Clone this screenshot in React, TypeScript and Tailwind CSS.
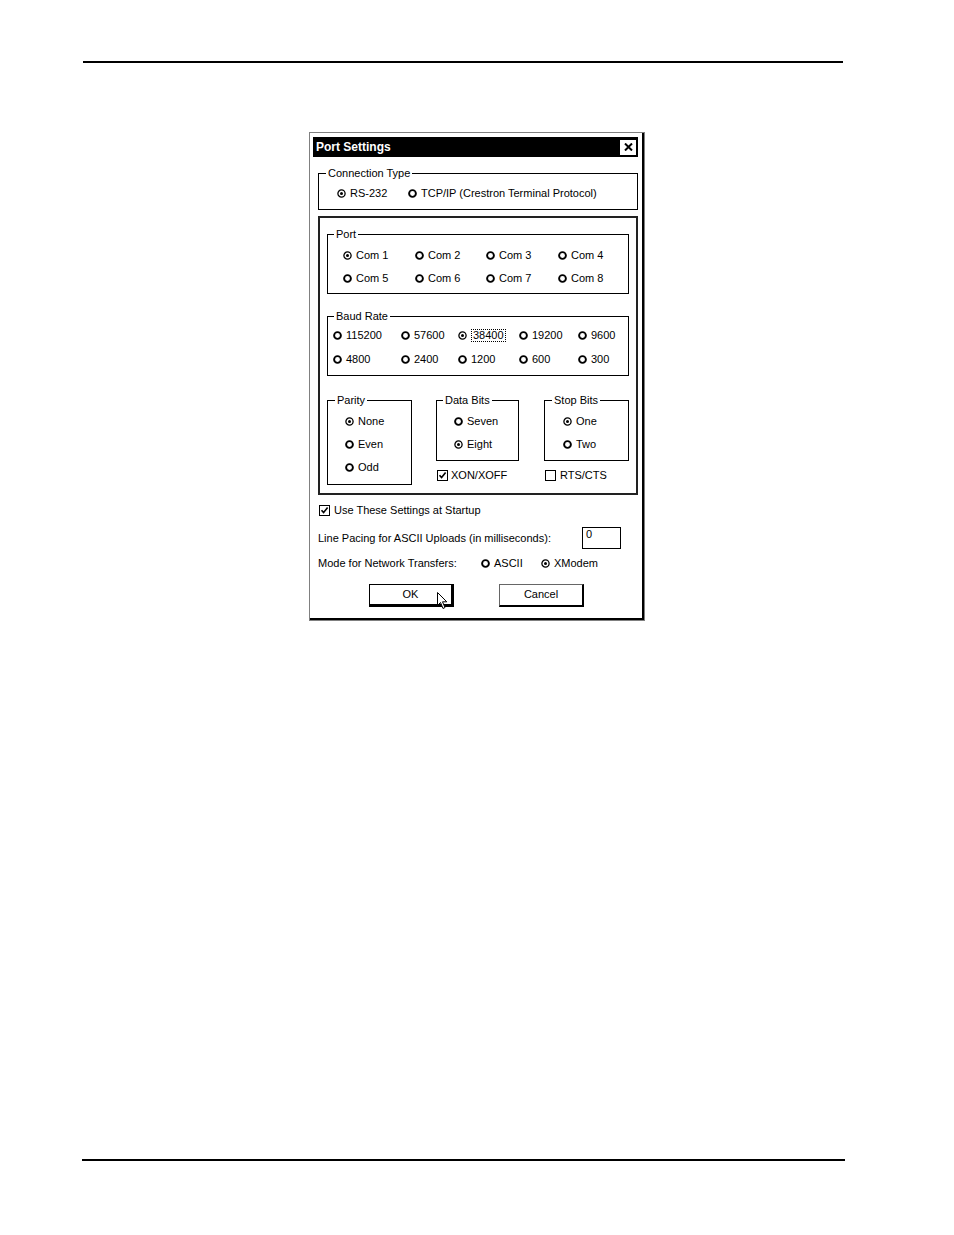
import type { ReactNode } from "react";

function Radio({ checked = false }: { checked?: boolean }) {
  return (
    <svg width="9" height="9" viewBox="0 0 9 9" className="shrink-0">
      {checked ? (
        <>
          <circle cx="4.5" cy="4.5" r="3.6" fill="white" stroke="black" strokeWidth="1.3" />
          <circle cx="4.5" cy="4.5" r="1.5" fill="black" />
        </>
      ) : (
        <circle cx="4.5" cy="4.5" r="3.4" fill="white" stroke="black" strokeWidth="1.9" />
      )}
    </svg>
  );
}

function Check({ checked = false }: { checked?: boolean }) {
  return (
    <span className="flex h-[11px] w-[11px] shrink-0 items-center justify-center border border-black bg-white">
      {checked && (
        <svg width="9" height="9" viewBox="0 0 9 9">
          <path d="M1.5 4.2 L3.6 6.6 L7.6 1.6" fill="none" stroke="black" strokeWidth="1.6" />
        </svg>
      )}
    </span>
  );
}

function Option({ label, checked, focus }: { label: string; checked?: boolean; focus?: boolean }) {
  return (
    <div className="flex h-[13px] items-center gap-[4px] leading-[13px]">
      <Radio checked={checked} />
      <span className={focus ? "border border-dotted border-black px-[1px] leading-[11px]" : ""}>{label}</span>
    </div>
  );
}

function GroupBox({
  title,
  labelLeft,
  className,
  children,
}: {
  title: string;
  labelLeft: string;
  className: string;
  children: ReactNode;
}) {
  return (
    <div className={`relative border border-black ${className}`}>
      <span className={`absolute -top-[7px] ${labelLeft} bg-white px-[2px] leading-[13px]`}>{title}</span>
      {children}
    </div>
  );
}

const PORTS = ["Com 1", "Com 2", "Com 3", "Com 4", "Com 5", "Com 6", "Com 7", "Com 8"];
const BAUDS = ["115200", "57600", "38400", "19200", "9600", "4800", "2400", "1200", "600", "300"];

export default function App() {
  return (
    <div className="relative h-[1235px] w-[954px] overflow-hidden bg-white font-['Liberation_Sans',Arial,sans-serif] text-[11px] text-black">
      <div className="pl-[83px] pt-[61px]">
        <div className="h-[2px] w-[760px] bg-black" />
      </div>

      <div className="ml-[309px] mt-[69px] flex h-[489px] w-[336px] flex-col border border-[#808080]">
        <div className="relative flex-1 border-b-2 border-r-2 border-black pl-[3px] pr-[4px] pt-[4px]">
          <div className="flex h-[20px] items-center justify-between bg-black pl-[3px] pr-[2px]">
            <span className="text-[12px] font-bold text-white">Port Settings</span>
            <span className="flex h-[15px] w-[16px] items-center justify-center bg-white">
              <svg width="9" height="8" viewBox="0 0 9 8">
                <path d="M1 0.5 L8 7.5 M8 0.5 L1 7.5" stroke="black" strokeWidth="2" />
              </svg>
            </span>
          </div>

          <GroupBox title="Connection Type" labelLeft="left-[7px]" className="ml-[5px] mt-[16px] h-[37px] w-[320px] pl-[18px] pt-[13px]">
            <div className="grid grid-cols-[71px_auto]">
              <Option label="RS-232" checked />
              <Option label="TCP/IP (Crestron Terminal Protocol)" />
            </div>
          </GroupBox>

          <div className="ml-[5px] mt-[6px] h-[279px] w-[320px] border-2 border-[#222] pl-[7px]">
            <GroupBox title="Port" labelLeft="left-[6px]" className="mt-[16px] h-[60px] w-[302px] pl-[15px] pt-[14px]">
              <div className="grid grid-cols-[72px_71px_72px_71px] gap-y-[10px]">
                {PORTS.map((p) => (
                  <Option key={p} label={p} checked={p === "Com 1"} />
                ))}
              </div>
            </GroupBox>

            <GroupBox title="Baud Rate" labelLeft="left-[6px]" className="mt-[22px] h-[60px] w-[302px] pl-[5px] pt-[12px]">
              <div className="grid grid-cols-[68px_57px_61px_59px_auto] gap-y-[11px]">
                {BAUDS.map((b) => (
                  <Option key={b} label={b} checked={b === "38400"} focus={b === "38400"} />
                ))}
              </div>
            </GroupBox>

            <div className="mt-[24px] flex">
              <GroupBox title="Parity" labelLeft="left-[7px]" className="h-[85px] w-[85px] pl-[17px] pt-[14px]">
                <div className="flex flex-col gap-[10px]">
                  <Option label="None" checked />
                  <Option label="Even" />
                  <Option label="Odd" />
                </div>
              </GroupBox>

              <div className="ml-[24px] flex flex-col">
                <GroupBox title="Data Bits" labelLeft="left-[6px]" className="h-[61px] w-[83px] pl-[17px] pt-[14px]">
                  <div className="flex flex-col gap-[10px]">
                    <Option label="Seven" />
                    <Option label="Eight" checked />
                  </div>
                </GroupBox>
                <div className="ml-[1px] mt-[8px] flex h-[13px] items-center gap-[3px]">
                  <Check checked />
                  <span>XON/XOFF</span>
                </div>
              </div>

              <div className="ml-[25px] flex flex-col">
                <GroupBox title="Stop Bits" labelLeft="left-[7px]" className="h-[61px] w-[85px] pl-[18px] pt-[14px]">
                  <div className="flex flex-col gap-[10px]">
                    <Option label="One" checked />
                    <Option label="Two" />
                  </div>
                </GroupBox>
                <div className="ml-[1px] mt-[8px] flex h-[13px] items-center gap-[4px]">
                  <Check />
                  <span>RTS/CTS</span>
                </div>
              </div>
            </div>
          </div>

          <div className="ml-[6px] mt-[9px] flex h-[13px] items-center gap-[4px]">
            <Check checked />
            <span>Use These Settings at Startup</span>
          </div>

          <div className="ml-[5px] mt-[10px] grid grid-cols-[264px_39px] items-center">
            <span>Line Pacing for ASCII Uploads (in milliseconds):</span>
            <div className="h-[22px] border border-black pl-[3px] leading-[12px]">0</div>
          </div>

          <div className="ml-[5px] mt-[6px] grid grid-cols-[163px_60px_auto] items-center">
            <span>Mode for Network Transfers:</span>
            <Option label="ASCII" />
            <Option label="XModem" checked />
          </div>

          <div className="relative ml-[56px] mt-[12px] flex gap-[45px]">
            <button className="flex h-[23px] w-[85px] items-center justify-center border border-b-[3px] border-r-[3px] border-black bg-white">
              OK
            </button>
            <button className="flex h-[23px] w-[85px] items-center justify-center border border-b-2 border-r-2 border-black border-l-[#666] border-t-[#666] bg-white">
              Cancel
            </button>
            <svg width="12" height="18" viewBox="0 0 12 18" className="absolute left-[68px] top-[8px]">
              <path d="M0.5 0.5 L0.5 13.5 L3.5 10.5 L6 16.5 L8 15.5 L5.5 9.8 L9.8 9.8 Z" fill="white" stroke="black" strokeWidth="1" />
            </svg>
          </div>
        </div>
      </div>

      <div className="pl-[82px] pt-[538px]">
        <div className="h-[2px] w-[763px] bg-black" />
      </div>
    </div>
  );
}
